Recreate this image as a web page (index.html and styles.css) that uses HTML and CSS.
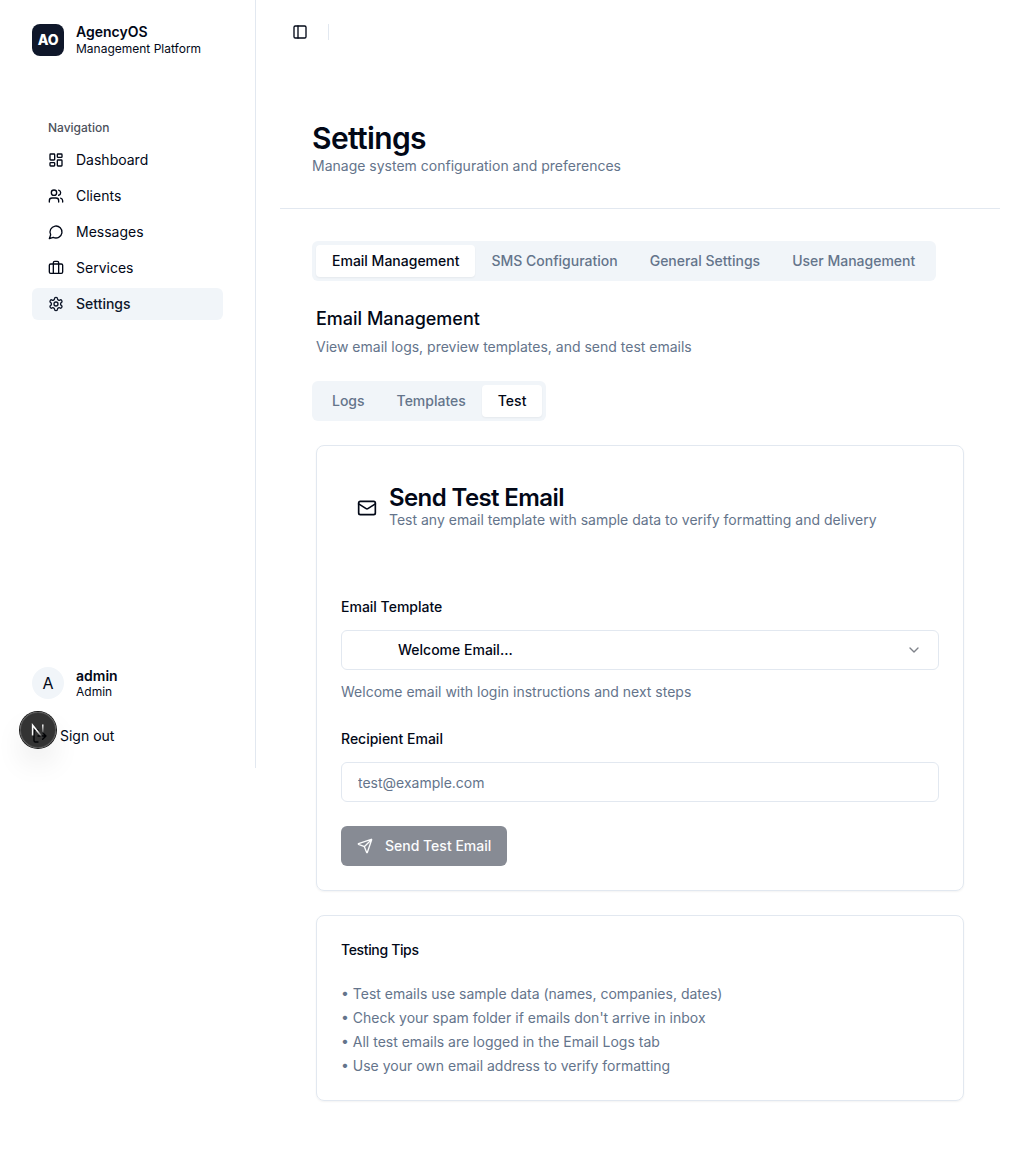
FILE: index.html
```html
<!DOCTYPE html>
<html lang="en">
<head>
<meta charset="utf-8">
<title>AgencyOS – Settings</title>
<link rel="stylesheet" href="styles.css">
</head>
<body>
<div class="app">
  <aside class="sidebar">
    <div class="brand">
      <div class="logo">AO</div>
      <div class="identity"><strong>AgencyOS</strong><span>Management Platform</span></div>
    </div>
    <nav class="nav">
      <div class="nav-label">Navigation</div>
      <a class="nav-item"><svg class="icon" viewBox="0 0 24 24"><rect width="7" height="9" x="3" y="3" rx="1"/><rect width="7" height="5" x="14" y="3" rx="1"/><rect width="7" height="9" x="14" y="12" rx="1"/><rect width="7" height="5" x="3" y="16" rx="1"/></svg>Dashboard</a>
      <a class="nav-item"><svg class="icon" viewBox="0 0 24 24"><path d="M16 21v-2a4 4 0 0 0-4-4H6a4 4 0 0 0-4 4v2"/><circle cx="9" cy="7" r="4"/><path d="M22 21v-2a4 4 0 0 0-3-3.87M16 3.13a4 4 0 0 1 0 7.75"/></svg>Clients</a>
      <a class="nav-item"><svg class="icon" viewBox="0 0 24 24"><path d="M7.9 20A9 9 0 1 0 4 16.1L2 22Z"/></svg>Messages</a>
      <a class="nav-item"><svg class="icon" viewBox="0 0 24 24"><path d="M16 20V4a2 2 0 0 0-2-2h-4a2 2 0 0 0-2 2v16"/><rect width="20" height="14" x="2" y="6" rx="2"/></svg>Services</a>
      <a class="nav-item active"><svg class="icon" viewBox="0 0 24 24"><path d="M12.22 2h-.44a2 2 0 0 0-2 2v.18a2 2 0 0 1-1 1.73l-.43.25a2 2 0 0 1-2 0l-.15-.08a2 2 0 0 0-2.73.73l-.22.38a2 2 0 0 0 .73 2.73l.15.1a2 2 0 0 1 1 1.72v.51a2 2 0 0 1-1 1.74l-.15.09a2 2 0 0 0-.73 2.73l.22.38a2 2 0 0 0 2.73.73l.15-.08a2 2 0 0 1 2 0l.43.25a2 2 0 0 1 1 1.73V20a2 2 0 0 0 2 2h.44a2 2 0 0 0 2-2v-.18a2 2 0 0 1 1-1.73l.43-.25a2 2 0 0 1 2 0l.15.08a2 2 0 0 0 2.73-.73l.22-.39a2 2 0 0 0-.73-2.73l-.15-.08a2 2 0 0 1-1-1.74v-.5a2 2 0 0 1 1-1.74l.15-.09a2 2 0 0 0 .73-2.73l-.22-.38a2 2 0 0 0-2.73-.73l-.15.08a2 2 0 0 1-2 0l-.43-.25a2 2 0 0 1-1-1.73V4a2 2 0 0 0-2-2z"/><circle cx="12" cy="12" r="3"/></svg>Settings</a>
    </nav>
    <div class="account">
      <div class="user">
        <div class="avatar">A</div>
        <div class="identity"><strong>admin</strong><span>Admin</span></div>
      </div>
      <a class="signout"><svg class="icon" viewBox="0 0 24 24"><path d="M9 21H5a2 2 0 0 1-2-2V5a2 2 0 0 1 2-2h4M16 17l5-5-5-5M21 12H9"/></svg>Sign out</a>
    </div>
  </aside>

  <main class="main">
    <header class="topbar">
      <svg class="icon" viewBox="0 0 24 24"><rect width="18" height="18" x="3" y="3" rx="2"/><path d="M9 3v18"/></svg>
      <span class="separator"></span>
    </header>
    <div class="page-header">
      <h1>Settings</h1>
      <p>Manage system configuration and preferences</p>
    </div>
    <div class="content">
      <div class="tabs main-tabs">
        <button class="tab active">Email Management</button>
        <button class="tab">SMS Configuration</button>
        <button class="tab">General Settings</button>
        <button class="tab">User Management</button>
      </div>
      <div class="section-title">
        <h2>Email Management</h2>
        <p>View email logs, preview templates, and send test emails</p>
      </div>
      <div class="tabs">
        <button class="tab">Logs</button>
        <button class="tab">Templates</button>
        <button class="tab active">Test</button>
      </div>

      <section class="card form-card">
        <div class="card-header">
          <svg class="icon mail" viewBox="0 0 24 24"><rect width="20" height="16" x="2" y="4" rx="2"/><path d="m22 7-8.97 5.7a1.94 1.94 0 0 1-2.06 0L2 7"/></svg>
          <div>
            <h3>Send Test Email</h3>
            <p>Test any email template with sample data to verify formatting and delivery</p>
          </div>
        </div>
        <label class="label">Email Template</label>
        <div class="field select"><span>Welcome Email...</span><svg class="icon chevron" viewBox="0 0 24 24"><path d="m6 9 6 6 6-6"/></svg></div>
        <p class="hint">Welcome email with login instructions and next steps</p>
        <label class="label" for="recipient">Recipient Email</label>
        <input class="field" id="recipient" type="email" placeholder="test@example.com">
        <button class="send" disabled><svg class="icon" viewBox="0 0 24 24"><path d="M14.536 21.686a.5.5 0 0 0 .937-.024l6.5-19a.496.496 0 0 0-.635-.635l-19 6.5a.5.5 0 0 0-.024.937l7.93 3.18a2 2 0 0 1 1.112 1.11zM21.854 2.147l-10.94 10.939"/></svg>Send Test Email</button>
      </section>

      <section class="card tips">
        <h4>Testing Tips</h4>
        <p>• Test emails use sample data (names, companies, dates)</p>
        <p>• Check your spam folder if emails don't arrive in inbox</p>
        <p>• All test emails are logged in the Email Logs tab</p>
        <p>• Use your own email address to verify formatting</p>
      </section>
    </div>
  </main>
</div>
<div class="dev-badge">
  <svg viewBox="0 0 36 36" width="36" height="36" fill="none">
    <defs>
      <linearGradient id="diagonal" x1="18" y1="18" x2="23" y2="25" gradientUnits="userSpaceOnUse"><stop stop-color="#fff"/><stop offset="1" stop-color="#fff" stop-opacity="0"/></linearGradient>
      <linearGradient id="stem" x1="22.8" y1="12.5" x2="22.8" y2="22" gradientUnits="userSpaceOnUse"><stop stop-color="#fff"/><stop offset="1" stop-color="#fff" stop-opacity="0"/></linearGradient>
    </defs>
    <path d="M12.6 23.4V13.2L22.8 26" stroke="url(#diagonal)" stroke-width="1.5"/>
    <path d="M22.8 12.4V23" stroke="url(#stem)" stroke-width="1.5"/>
  </svg>
</div>
</body>
</html>
```
FILE: styles.css
```css
* { box-sizing: border-box; }

body {
  margin: 0;
  background: #fff;
  color: #020817;
  font: 14px/20px Inter, "Liberation Sans", sans-serif;
  -webkit-font-smoothing: antialiased;
}

h1, h2, h3, h4, p { margin: 0; }
p { color: #64748b; }
button, input { font: inherit; }

.icon {
  width: 16px;
  height: 16px;
  flex: none;
  fill: none;
  stroke: currentColor;
  stroke-width: 2;
  stroke-linecap: round;
  stroke-linejoin: round;
}

.app { display: flex; align-items: flex-start; min-height: 1157px; }

.sidebar {
  display: flex;
  flex-direction: column;
  flex: none;
  width: 256px;
  height: 768px;
  padding: 24px 32px 16px;
  border-right: 1px solid #e2e8f0;
}

.brand, .user { display: flex; align-items: center; gap: 12px; }

.logo, .avatar {
  display: grid;
  place-items: center;
  width: 32px;
  height: 32px;
}
.logo { border-radius: 8px; background: #0f172a; color: #fff; font-weight: 800; letter-spacing: -0.02em; }
.avatar { border-radius: 50%; background: #f1f5f9; font-size: 16px; }

.identity { display: flex; flex-direction: column; }
.identity strong { font-weight: 600; line-height: 17px; }
.identity span { font-size: 12px; line-height: 15px; }
.brand .identity strong { line-height: 16px; padding-bottom: 1px; }

.nav { display: flex; flex-direction: column; gap: 4px; margin-top: 56px; }
.nav-label {
  height: 32px;
  margin-bottom: -4px;
  padding: 0 16px;
  color: #4c515c;
  font-size: 12px;
  font-weight: 500;
  line-height: 32px;
}
.nav-item {
  display: flex;
  align-items: center;
  gap: 12px;
  height: 32px;
  padding: 0 16px;
  border-radius: 6px;
}
.nav-item.active { background: #f1f5f9; color: #0f172a; font-weight: 500; }

.account { margin-top: auto; }
.signout { display: flex; align-items: center; gap: 12px; height: 32px; margin-top: 21px; }

.main { flex: 1; min-width: 0; padding: 0 24px; }

.topbar { display: flex; align-items: center; gap: 20px; height: 64px; padding-left: 12px; }
.separator { width: 1px; height: 16px; background: #e2e8f0; }

.page-header { height: 145px; padding: 56px 32px 0; border-bottom: 1px solid #e2e8f0; }
.page-header h1 { font-size: 30px; line-height: 36px; font-weight: 600; letter-spacing: -0.021em; }

.content { padding: 32px 36px 0; }

.tabs {
  display: inline-flex;
  height: 40px;
  margin-left: -4px;
  padding: 4px;
  border-radius: 6px;
  background: #f1f5f9;
}
.main-tabs { width: 624px; }
.tab {
  padding: 6px 16px;
  border: 0;
  border-radius: 4px;
  background: none;
  color: #64748b;
  font-weight: 500;
  white-space: nowrap;
}
.tab.active { background: #fff; color: #020817; box-shadow: 0 1px 2px rgb(0 0 0 / 5%); }

.section-title { padding: 24px 0; }
.section-title h2 { font-size: 18px; line-height: 28px; font-weight: 500; }
.section-title p { margin-top: 4px; }

.card {
  margin-top: 24px;
  padding: 24px;
  border: 1px solid #e2e8f0;
  border-radius: 8px;
  box-shadow: 0 1px 2px rgb(0 0 0 / 5%);
}
.form-card { height: 446px; }

.card-header { display: flex; align-items: center; gap: 12px; height: 76px; padding: 0 16px; }
.card-header h3 { font-size: 24px; line-height: 24px; font-weight: 600; letter-spacing: -0.025em; }
.mail { width: 20px; height: 20px; }

.label { display: block; font-weight: 500; line-height: 14px; }
.card-header + .label { margin-top: 54px; }

.field {
  display: block;
  width: 100%;
  height: 40px;
  margin-top: 16px;
  padding: 0 16px;
  border: 1px solid #e2e8f0;
  border-radius: 6px;
  background: #fff;
  color: inherit;
}
.field::placeholder { color: #64748b; opacity: 1; }
.select { display: flex; align-items: center; justify-content: space-between; padding-left: 56px; font-weight: 500; }
.chevron { opacity: .5; }
.hint { margin: 12px 0 30px; }

.send {
  display: flex;
  align-items: center;
  gap: 12px;
  height: 40px;
  margin-top: 24px;
  padding: 0 16px;
  border: 0;
  border-radius: 6px;
  background: #878b94;
  color: #fbfcfd;
  font-weight: 500;
}

.tips { height: 186px; }
.tips h4 { margin-bottom: 22px; font-weight: 500; letter-spacing: -0.025em; }
.tips p { line-height: 24px; }

/* Development indicator floating above the sidebar */
.dev-badge {
  position: absolute;
  left: 20px;
  top: 712px;
  display: grid;
  place-items: center;
  width: 36px;
  height: 36px;
  border-radius: 50%;
  background: rgb(0 0 0 / 80%);
  box-shadow: 0 0 0 1px #171717, inset 0 0 0 1px rgb(255 255 255 / 14%), 0 16px 32px -8px rgb(0 0 0 / 24%);
}
```
